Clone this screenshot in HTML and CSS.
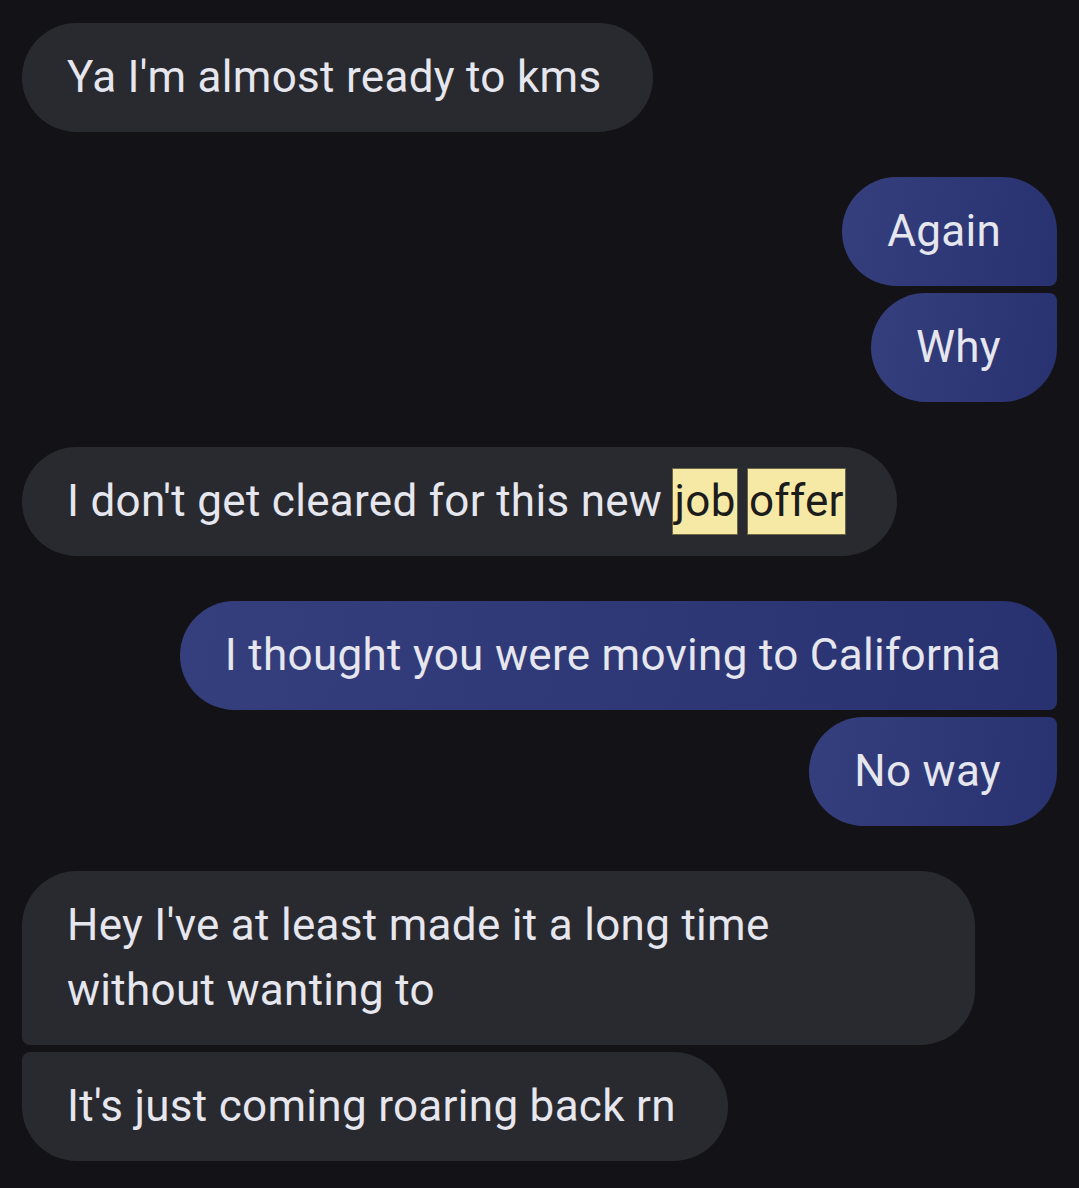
FILE: index.html
```html
<!DOCTYPE html>
<html lang="en">
<head>
<meta charset="UTF-8">
<meta name="viewport" content="width=device-width, initial-scale=1.0">
<title>Messages</title>
<link rel="stylesheet" href="styles.css">
</head>
<body>

  <div class="thread">

    <!-- Incoming -->
    <div class="group in">
      <div class="bubble">Ya I'm almost ready to kms</div>
    </div>

    <!-- Outgoing -->
    <div class="group out">
      <div class="bubble first">Again</div>
      <div class="bubble last">Why</div>
    </div>

    <div class="group in">
      <div class="bubble">I don't get cleared for this new <span class="hl">job</span> <span class="hl">offer</span></div>
    </div>

    <div class="group out">
      <div class="bubble first">I thought you were moving to California</div>
      <div class="bubble last">No way</div>
    </div>

    <div class="group in">
      <div class="bubble first">Hey I've at least made it a long time without wanting to</div>
      <div class="bubble last">It's just coming roaring back rn</div>
    </div>

  </div>

</body>
</html>
```

FILE: styles.css
```css
/* Page */
body {
  margin: 0;
  background-color: #131317;
  font-family: Roboto, "Noto Sans", sans-serif;
  color: #e6e6ee;
}

.thread {
  display: flex;
  flex-direction: column;
  gap: 45px;
  padding: 23px 22px 27px 22px;
}

/* Message groups */
.group {
  display: flex;
  flex-direction: column;
  gap: 7px;
}

.group.in {
  align-items: flex-start;
}

.group.out {
  align-items: flex-end;
}

/* Bubbles */
.bubble {
  box-sizing: border-box;
  max-width: 953px;
  padding: 22px 52px 22px 45px;
  font-size: 44px;
  line-height: 65px;
  letter-spacing: 0.3px;
  border-radius: 55px;
}

.in .bubble {
  background-color: #292a2f;
}

.out .bubble {
  padding-right: 56px;
  background: linear-gradient(100deg, #363f7d 0%, #293271 100%);
}

.out .bubble.first {
  border-bottom-right-radius: 8px;
}

.out .bubble.last {
  border-top-right-radius: 8px;
}

.in .bubble.first {
  border-bottom-left-radius: 8px;
}

.in .bubble.last {
  border-top-left-radius: 8px;
}

/* Search highlight */
.hl {
  display: inline-block;
  padding: 0 1px;
  background-color: #f6e9a6;
  color: #1c1c1c;
  outline: 1px solid #6b6548;
}
```
